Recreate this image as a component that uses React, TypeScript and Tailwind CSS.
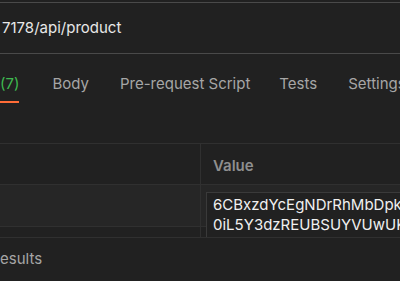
import React from "react";

export default function App() {
  return (
    <div
      className="w-[400px] h-[281px] overflow-hidden bg-[#212121]"
      style={{ fontFamily: "Inter, 'Noto Sans', sans-serif" }}
    >
      <div className="h-[2px]" />
      {/* URL bar */}
      <div className="h-[52px] border-y border-[#4a4a4a] flex items-center pl-[2px]">
        <span className="text-[15px] text-[#e8e8e8]">7178/api/product</span>
      </div>
      {/* Tabs */}
      <div className="h-[49px] flex items-stretch text-[15px] text-[#a6a6a6] whitespace-nowrap">
        <div className="relative w-[23px] flex items-center pt-[11px]">
          <span className="text-[#3fb950]">(7)</span>
          <div className="absolute left-0 right-0 bottom-0 h-[2px] bg-[#ff6c37]" />
        </div>
        <div className="flex items-center pt-[11px] ml-[33px]">Body</div>
        <div className="flex items-center pt-[11px] ml-[31px]">Pre-request Script</div>
        <div className="flex items-center pt-[11px] ml-[29px]">Tests</div>
        <div className="flex items-center pt-[11px] ml-[31px]">Settings</div>
      </div>
      <div className="h-[40px]" />
      {/* Table */}
      <div className="h-[95px] overflow-hidden border-t border-b border-[#303030]">
        <div className="flex h-[41px] border-b border-[#303030]">
          <div className="w-[201px] border-r border-[#303030]" />
          <div className="flex items-center pl-[12px] pt-[4px] text-[15px] font-semibold text-[#8f8f8f]">Value</div>
        </div>
        <div className="flex h-[42px] bg-[#262626] border-b border-[#303030]">
          <div className="w-[201px] border-r border-[#303030]" />
          <div className="relative flex-1">
            <div className="absolute left-[5px] top-[7px] right-[-20px] h-[60px] bg-[#212121] border-l border-t border-[#3a3a3a] pl-[6px] pt-[2px] text-[15px] leading-[20px] text-[#f0f0f0] whitespace-nowrap">
              <div>6CBxzdYcEgNDrRhMbDpk</div>
              <div>0iL5Y3dzREUBSUYVUwUK</div>
            </div>
          </div>
        </div>
        <div className="flex h-[20px]">
          <div className="w-[201px] border-r border-[#303030]" />
        </div>
      </div>
      <div className="h-[42px] flex items-center text-[15px] text-[#a6a6a6]">esults</div>
    </div>
  );
}
